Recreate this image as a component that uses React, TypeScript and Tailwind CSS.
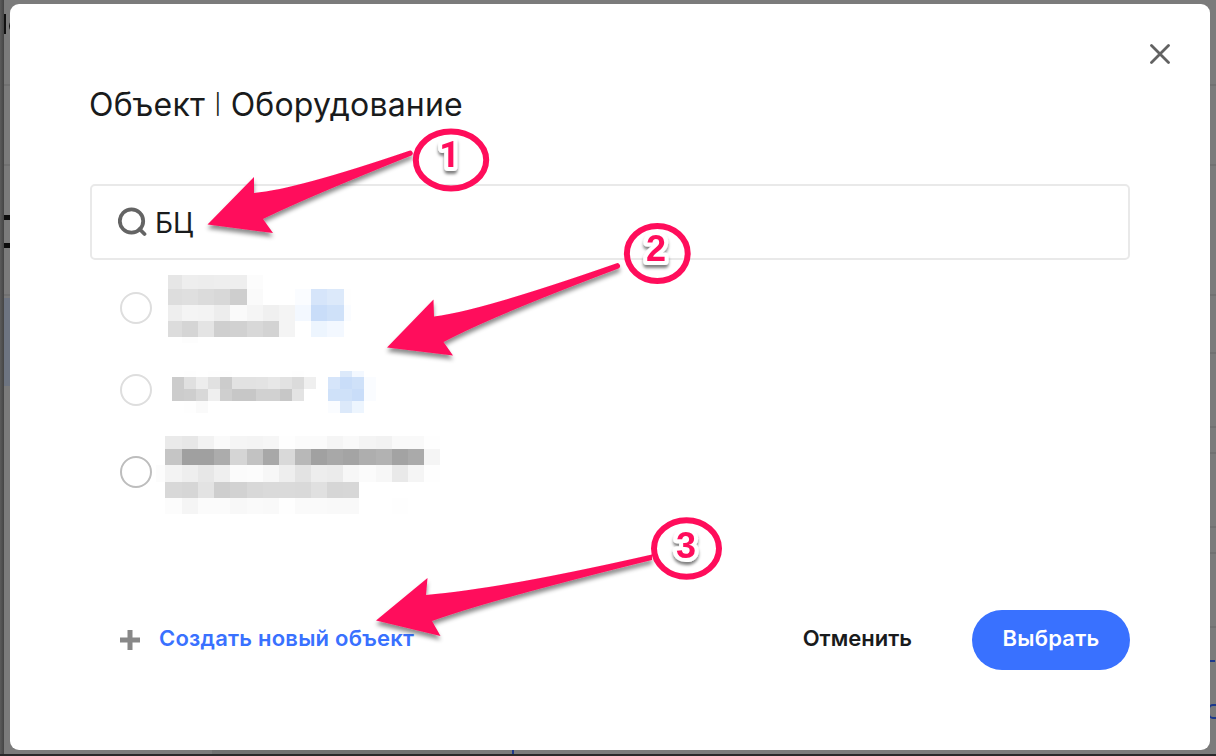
type Mosaic = { cols: number[]; rows: number[]; cells: string[] };

// Each cell is a two-digit hex grey, or a t-prefixed blue tint; one cell per column.
const blues: Record<string, string> = {
  t0: "#fafcff", t1: "#f3f8ff", t2: "#edf5fe", t3: "#dce9fa", t4: "#d6e5fa", t5: "#cfe1f9", t6: "#c9ddf9",
};
const tint = (c: string) => blues[c] ?? `#${c}${c}${c}`;

const first: Mosaic = {
  cols: [14, 16, 16, 16, 17, 16, 16, 16, 16, 16, 17, 7],
  rows: [14, 16, 16, 16, 6],
  cells: [
    "e6 ee ed ee ee fc ff ff ff ff ff ff",
    "dd df db d8 ce fa ff ff t0 t4 t3 fe",
    "ee f4 f3 ed fa f5 f0 f4 t1 t6 t5 t0",
    "dc d5 e4 cf d1 d8 d3 f4 ff t2 t1 ff",
    "ff fd ff ff ff ff ff ff ff ff ff ff",
  ],
};

const second: Mosaic = {
  cols: [12, 12, 12, 12, 12, 12, 12, 12, 12, 12, 12, 12, 12, 12, 12, 12, 12],
  rows: [6, 12, 12, 12],
  cells: [
    "ff fe ff fe fe ff ff ff ff ff fe ff ff ff t3 t1 ff",
    "cc e0 ed e1 cc e2 e2 e3 e7 e2 db ef ff t4 t6 t5 t0",
    "cc ce d8 ef cf c7 c7 d1 d1 c7 e3 ff ff t5 t5 t6 t0",
    "ff fe fa ff ff ff ff ff ff ff ff ff ff t0 t3 t2 ff",
  ],
};

const third: Mosaic = {
  cols: [9, 17, 16, 16, 16, 17, 16, 16, 16, 16, 16, 16, 16, 17, 16, 16, 16, 16],
  rows: [13, 16, 17, 16, 16],
  cells: [
    "ff ea e7 f2 fa f5 f4 f6 fe fb fb f5 f9 f4 f2 f9 f9 fe",
    "ff c5 a0 a0 ac d5 c2 a8 d9 b8 a1 a8 a4 ae b2 a3 aa f5",
    "fc f3 ee e7 ef fb fc f7 ee e3 ed eb f7 fb f7 e9 f5 fe",
    "ff d8 d6 e3 ce d2 d8 da da d9 e0 d6 d7 ff ff ff ff ff",
    "ff fc f5 fb fb f8 fa f9 fe fa fa f9 f9 ff ff fe ff ff",
  ],
};

function Pixels({ data, className }: { data: Mosaic; className: string }) {
  return (
    <div
      className={`grid shrink-0 ${className}`}
      style={{
        gridTemplateColumns: data.cols.map((n) => `${n}px`).join(" "),
        gridTemplateRows: data.rows.map((n) => `${n}px`).join(" "),
      }}
    >
      {data.cells.flatMap((row, r) =>
        row.split(" ").map((c, i) => <span key={`${r}-${i}`} style={{ backgroundColor: tint(c) }} />),
      )}
    </div>
  );
}

function Radio({ className }: { className: string }) {
  return <span className={`size-8 shrink-0 rounded-full border-2 bg-white ${className}`} />;
}

function Callouts() {
  const face = "font-['Liberation_Sans',sans-serif]";
  const marks = [
    { n: "1", x: 449.5, y: 167, cx: 451, cy: 160, rx: 35.2, ry: 28.5, font: "font-['Roboto',sans-serif]" },
    { n: "2", x: 656, y: 261, cx: 657.3, cy: 253.5, rx: 30.4, ry: 27.5, font: face },
    { n: "3", x: 686, y: 557.5, cx: 686.5, cy: 548.5, rx: 32.5, ry: 28.2, font: face },
  ];
  return (
    <svg className="pointer-events-none absolute inset-0" width="1216" height="756" viewBox="0 0 1216 756">
      <defs>
        <filter id="soft" x="-10%" y="-20%" width="120%" height="150%">
          <feDropShadow dx="0" dy="4" stdDeviation="2" floodColor="#000" floodOpacity="0.45" />
        </filter>
        <filter id="lift" x="-50%" y="-30%" width="200%" height="180%">
          <feDropShadow dx="0" dy="3" stdDeviation="1.8" floodColor="#000" floodOpacity="0.5" />
        </filter>
      </defs>
      <g fill="#ff0d5b" filter="url(#soft)">
        <path d="M207.500 224.500L254 177V193Q297 189 408.500 151A2.700 2.700 0 0 1 411.500 155.500Q308 197 263 219L273 233Z" />
        <path d="M387 347.500L433.500 299.500L434 316.500Q480 311 616 263.500A2.700 2.700 0 0 1 618.500 268.500Q490 317 443.500 342L453 355.500Z" />
        <path d="M376 620.500L427.500 578L426 595Q500 589 652 554.500V560Q490 600 432 621L440.500 636Z" />
      </g>
      {marks.map((m) => (
        <g key={m.n}>
          <ellipse cx={m.cx} cy={m.cy} rx={m.rx} ry={m.ry} fill="none" stroke="#ff0d5b" strokeWidth="6" />
          <g filter="url(#lift)">
            <text
              x={m.x}
              y={m.y}
              textAnchor="middle"
              className={`${m.font} text-[36px] font-bold`}
              fill="#ff0d5b"
              stroke="#fff"
              strokeWidth="8"
              strokeLinejoin="round"
              paintOrder="stroke"
            >
              {m.n}
            </text>
          </g>
        </g>
      ))}
    </svg>
  );
}

function Backdrop() {
  const lines = [84, 164, 294, 352, 426, 452, 526, 552, 626];
  return (
    <div className="absolute inset-0 overflow-hidden border-b-2 border-[#292829] bg-[#7b7b7b]">
      {lines.map((y, i) => (
        <i key={y} className={`absolute right-0 h-0.5 bg-[#717171] ${i < 3 ? "left-0" : "left-[1200px]"}`} style={{ top: y }} />
      ))}
      <i className="absolute top-[298px] left-1 h-[88px] w-2 bg-[#6d7481]" />
      <i className="absolute bottom-0 left-[212px] h-1 w-[258px] bg-[#717171]" />
      <i className="absolute bottom-0 left-0 h-full w-1 bg-linear-to-r from-[#5b5b5b] to-[#444]" />
      <i className="absolute top-[14px] left-1 h-5 w-0.5 bg-[#101010]" />
      <i className="absolute top-[19px] left-[9px] h-3.5 w-4 rounded-full border-2 border-[#101010]" />
      <i className="absolute top-[215px] -left-3 h-[33px] w-9 border-y-[5px] border-[#0c0c0c] [clip-path:inset(0_0_0_16px)]" />
      <i className="absolute top-[660px] left-[1209px] h-0.5 w-[6px] bg-[#1c388d]" />
      <i className="absolute top-[704px] left-[1208px] h-[15px] w-4 rounded-[5px] border-2 border-[#1c388d]" />
      <i className="absolute bottom-0 left-[512px] h-1 w-0.5 bg-[#1c388d]" />
    </div>
  );
}

export default function App() {
  return (
    <div className="relative h-[756px] w-[1216px] overflow-hidden pt-1 pl-[10px] font-['Inter','Noto_Sans',sans-serif] text-[#191b1c]">
      <Backdrop />
      <div className="relative flex h-[746px] w-[1200px] flex-col rounded-[9px] bg-white px-20">
        <div className="-mr-10 flex h-[77px] justify-end pt-10">
          <svg width="20" height="20" viewBox="0 0 20 20" fill="none" stroke="#626262" strokeWidth="2.8" strokeLinecap="round">
            <path d="M1.500 1.500l17 17M18.500 1.500l-17 17" />
          </svg>
        </div>
        <h1 className="-ml-px flex h-[103px] text-[32px] leading-[48px] font-normal tracking-[0.200px] whitespace-nowrap">
          <span>Объект</span>
          <span className="mt-[-1px] w-[25.500px] text-center text-[20px]">|</span>
          <span>Оборудование</span>
        </h1>
        <div className="flex h-[76px] shrink-0 items-center gap-[8px] rounded-[5px] border-2 border-[#e9e9e9] pl-[26px]">
          <svg width="29" height="30" viewBox="0 0 29 30" fill="none" stroke="#646464" strokeWidth="3.800">
            <circle cx="13.500" cy="14" r="11.700" />
            <path d="M21.500 22l5 5" strokeLinecap="round" />
          </svg>
          <span className="mt-px text-[28px] leading-9">БЦ</span>
        </div>
        <ul className="flex h-[350px] shrink-0 flex-col">
          <li className="flex h-[97px] items-start pt-4 pl-[30px]">
            <Radio className="mt-4 border-[#dedede]" />
            <Pixels data={first} className="-mt-[1px] ml-4" />
          </li>
          <li className="flex h-[79px] items-start pt-[14px] pl-[30px]">
            <Radio className="mt-[3px] border-[#dedede]" />
            <Pixels data={second} className="ml-5" />
          </li>
          <li className="flex h-[90px] items-start pl-[30px]">
            <Radio className="mt-5 border-[#bdbdbd]" />
            <Pixels data={third} className="ml-1" />
          </li>
        </ul>
        <div className="flex h-[60px] shrink-0 items-center text-[22px] font-semibold">
          <button className="flex items-center gap-[19px] pl-[30px] text-[#3971ff]">
            <svg width="20" height="20" viewBox="0 0 20 20" stroke="#888" strokeWidth="5">
              <path d="M0 10h20M10 0v20" />
            </svg>
            <span className="mb-[4px] tracking-[0.220px] whitespace-nowrap">Создать новый объект</span>
          </button>
          <button className="mr-[60px] mb-[4px] ml-auto">Отменить</button>
          <button className="h-[60px] w-[158px] rounded-[30px] bg-[#3971ff] pb-[3px] tracking-[0.200px] text-white">Выбрать</button>
        </div>
      </div>
      <Callouts />
    </div>
  );
}
